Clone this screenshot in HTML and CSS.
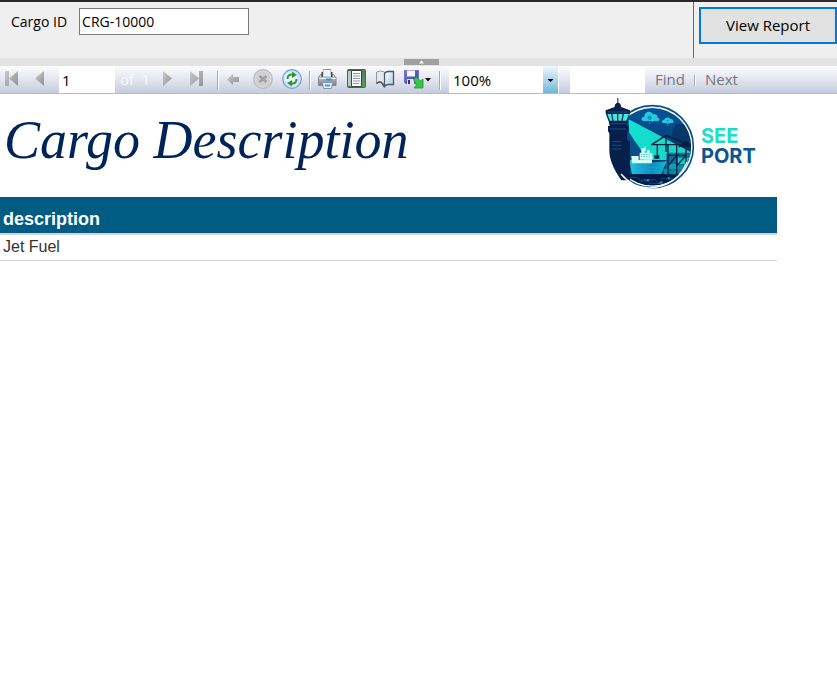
FILE: index.html
```html
<!DOCTYPE html>
<html lang="en">
<head>
<meta charset="utf-8">
<title>Cargo Description</title>
<link rel="stylesheet" href="styles.css">
</head>
<body>
<svg class="defs" aria-hidden="true">
  <defs>
    <linearGradient id="grey" x1="0" y1="0" x2="1" y2="1"><stop offset="0" stop-color="#c9c9c9"/><stop offset="1" stop-color="#939393"/></linearGradient>
    <linearGradient id="metal" x1="0" y1="0" x2="0" y2="1"><stop offset="0" stop-color="#d4d8dc"/><stop offset="1" stop-color="#777d84"/></linearGradient>
    <linearGradient id="paper" x1="0" y1="0" x2="1" y2="1"><stop offset="0" stop-color="#fff"/><stop offset="1" stop-color="#a9c3e6"/></linearGradient>
    <linearGradient id="floppy" x1="0" y1="0" x2="1" y2="1"><stop offset="0" stop-color="#7d7de0"/><stop offset="1" stop-color="#35359c"/></linearGradient>
    <linearGradient id="frame" x1="0" y1="0" x2="1" y2="1"><stop offset="0" stop-color="#4d5c50"/><stop offset="1" stop-color="#5aa05a"/></linearGradient>
  </defs>
</svg>
<form class="params" onsubmit="return false">
  <div class="fields">
    <label for="cargo">Cargo ID</label>
    <input id="cargo" type="text" value="CRG-10000">
  </div>
  <div class="submit"><button class="view" type="submit">View Report</button></div>
</form>
<div class="splitter">
  <button class="handle" type="button" aria-label="Hide parameters"><svg width="35" height="6" viewBox="0 0 35 6"><path d="M15 4.500 17.500 1.500 20 4.500z" fill="#fff"/></svg></button>
</div>
<div class="toolbar">
  <button type="button" aria-label="First page"><svg width="28" height="26" viewBox="0 0 28 26"><path d="M5 5h4v15H5zM18 5v15L9 12.500z" fill="url(#grey)"/></svg></button>
  <button type="button" aria-label="Previous page"><svg width="28" height="26" viewBox="0 0 28 26"><path d="M16 5v15L7 12.500z" fill="url(#grey)"/></svg></button>
  <input class="page" type="text" value="1" aria-label="Current page">
  <span class="total"><span>of</span><span>1</span></span>
  <button type="button" aria-label="Next page"><svg width="28" height="26" viewBox="0 0 28 26"><path d="M10 5v15l9-7.500z" fill="url(#grey)"/></svg></button>
  <button type="button" aria-label="Last page"><svg width="28" height="26" viewBox="0 0 28 26"><path d="M9 5v15l9-7.500zM18 5h4v15h-4z" fill="url(#grey)"/></svg></button>
  <i class="sep first"></i>
  <div class="group">
    <button type="button" aria-label="Back"><svg width="28" height="26" viewBox="0 0 28 26"><path d="M8 13.500 14 8v3h6v5h-6v3z" fill="url(#grey)"/></svg></button>
    <button type="button" aria-label="Stop"><svg width="28" height="26" viewBox="0 0 28 26"><circle cx="15" cy="13" r="9.300" fill="#dadada" stroke="#b8b8b8" stroke-width="1.200"/><circle cx="15" cy="13" r="7.500" fill="#d0d0d0"/><path d="m11.500 10 7 6m0-6-7 6" stroke="#a0a0a0" stroke-width="2.600"/></svg></button>
    <button type="button" aria-label="Refresh"><svg width="28" height="26" viewBox="0 0 28 26"><circle cx="15" cy="13" r="9.300" fill="#cfe4fd" stroke="#6e9edb" stroke-width="1.200"/><circle cx="14" cy="12" r="6" fill="#eef7ff"/><path d="M10.500 13c0-3 1.500-4.800 5-4.500M19.500 13c0 3-1.500 4.800-5 4.500" fill="none" stroke="#2d9a2d" stroke-width="2"/><path d="m15 5.500 5 3.500-5 3zM15 14l-5 3 5 3.500z" fill="#2d9a2d"/></svg></button>
  </div>
  <i class="sep"></i>
  <div class="group">
    <button type="button" aria-label="Print"><svg width="28" height="26" viewBox="0 0 28 26"><path d="M9.500 3.500h7l1 8h-9z" fill="url(#paper)" stroke="#8a929c"/><path d="M4.500 19.500v-8l2-3h13l2.500 3v8z" fill="url(#metal)" stroke="#858a90"/><path d="M9.500 4h7v6h-7z" fill="#f2f7ff"/><path d="M7.500 6h1.500v5H7.500zM17 6h1.500v5H17z" fill="#444a50"/><path d="M5 12.500h17" stroke="#eee"/><path d="M12 13.500h6" stroke="#3195f0" stroke-width="2"/><path d="M8.500 16.500h10l-1 6h-8z" fill="#e8f0fa" stroke="#8a96a5"/><path d="M11 19.500h5" stroke="#3aa0ed" stroke-width="2"/></svg></button>
    <button type="button" aria-label="Print layout"><svg width="28" height="26" viewBox="0 0 28 26"><rect x="4.500" y="3.500" width="18" height="18" rx="1" fill="url(#frame)" stroke="#426b48"/><path d="M5 5h3v15H5z" fill="#b9c9bf"/><path d="M8.500 4.500h10v16h-10z" fill="#fff" stroke="#39483e"/><path d="M10 7.500h7m-7 2.500h7M10 12.500h7m-7 2.500h7M10 17.500h6" stroke="#8294bb"/></svg></button>
    <button type="button" aria-label="Page setup"><svg width="28" height="26" viewBox="0 0 28 26"><path d="M4.500 6q4-2 8 0v13.500q-1.500-4-4-4t-4 2z" fill="#e4e9f0" stroke="#9299a4"/><path d="M4.500 17.500q4-3 6 .5l1.500 2.500" fill="none" stroke="#424b57" stroke-width="1.500"/><path d="M12.500 7.500q1.500-2 3.500-2h5.500v13H16q-2 0-3.500 2z" fill="url(#paper)" stroke="#4c596c" stroke-width="1.300"/></svg></button>
    <button type="button" aria-label="Export"><svg width="34" height="26" viewBox="0 0 34 26"><path d="M3.500 4.500h14v13h-13l-1-1z" fill="url(#floppy)" stroke="#7070c8"/><path d="M6 4.500h8v6H6z" fill="#f4f7ff"/><path d="M6 13h7v5H6z" fill="#dbe1ee"/><path d="M7 14h2v4H7z" fill="#32357d"/><path d="m12.500 13.500 3-2.500 4 4 2.500-2v9h-9l2.500-3z" fill="#37c44a" stroke="#239539" stroke-width=".8"/><path d="M24 12h6l-3 3.500z" fill="#111"/></svg></button>
  </div>
  <i class="sep"></i>
  <div class="zoom">
    <select aria-label="Zoom"><option>100%</option><option>150%</option></select>
    <svg width="15" height="27" viewBox="0 0 15 27" aria-hidden="true"><path d="M4.500 13h6l-3 3z" fill="#000"/></svg>
  </div>
  <input class="search" type="text" aria-label="Find text">
  <a class="find" href="#">Find</a>
  <i class="sep short"></i>
  <a class="next" href="#">Next</a>
</div>
<main class="report">
  <header>
    <h1>Cargo Description</h1>
    <svg class="logo" width="176" height="98" viewBox="0 0 528 294" role="img" aria-label="See Port">
      <defs>
        <clipPath id="disc"><circle cx="157" cy="152" r="116"/></clipPath>
        <clipPath id="edge"><path d="M0 0h160v294H0z M0 0"/></clipPath>
        <linearGradient id="sky" x1="0" y1="0" x2="0" y2="1"><stop offset="0" stop-color="#06559a"/><stop offset=".7" stop-color="#05396f"/><stop offset="1" stop-color="#031b4a"/></linearGradient>
        <linearGradient id="beam" x1="0" y1="0" x2="1" y2="1"><stop offset="0" stop-color="#0ce3d3"/><stop offset="1" stop-color="#21d3c4"/></linearGradient>
        <linearGradient id="hull" x1="0" y1="0" x2="1" y2="0"><stop offset="0" stop-color="#25c6df"/><stop offset=".6" stop-color="#0b8fc0"/><stop offset="1" stop-color="#12bbc9"/></linearGradient>
      </defs>
      <circle cx="157" cy="152" r="123" fill="#fff" stroke="#0c4f8c" stroke-width="5"/>
      <g clip-path="url(#disc)">
        <path d="M30 20h252v264H30z" fill="url(#sky)"/>
        <path d="M216 122c-2-32 20-46 38-35 20-8 40 13 35 36v70h-73z" fill="#06376b"/>
        <path d="m86 70 186 98-6 24H88z" fill="url(#beam)"/>
        <path d="m86 108 52 76-40 54H80z" fill="#0a4c86"/>
        <path d="M200 170h80v66h-84z" fill="#08709c"/>
        <path d="M88 192h32l8 10 72-6-16 38H96z" fill="url(#hull)"/>
        <path d="M94 180h22v12h40v10H96zM119 170h22v-7h8v8h8v20h-38zM124 157h10v13h-10zM134 152h3v13h-3z" fill="#d3fcf5"/>
        <path d="M122 175h32M122 182h30" stroke="#1cb6c9" stroke-width="2" stroke-dasharray="5 3"/>
        <path d="M104 206h30l12 9h36M106 216h22l9 8h38" fill="none" stroke="#20a3cb" stroke-width="2"/>
        <path d="M234 185h32v19h-32z" fill="#17c9c5"/><path d="M208 204h25v15h-25zM252 205h22v16h-22z" fill="#0ba0b8"/><path d="M234 208h18v15h-18zM190 218h18v17h-18zM212 222h20v17h-20zM236 226h20v15h-20z" fill="#0a8aa8"/>
        <path d="M153 146h110M156 145l42-27 68 28M198 118v50M204 146v88M230 146v88M258 146v88M172 148v30M238 150h47M236 154l20-17 28 15M204 178h56M204 210l26-32M230 210l28-32" fill="none" stroke="#06213f" stroke-width="4"/>
        <path d="M163 178h15v10h-15z" fill="#06213f"/>
        <path d="M30 235h252v60H30z" fill="#031a46"/>
        <path d="M74 244h35l11 9h24m-57 9h34l9-11h34l8 8m10-12h42m-115 25h30l9-10h42" fill="none" stroke="#0b659f" stroke-width="2"/>
        <g fill="#1685b8"><circle cx="144" cy="253" r="4"/><circle cx="184" cy="259" r="4"/><circle cx="114" cy="271" r="4"/><circle cx="207" cy="247" r="4"/><circle cx="178" cy="262" r="3"/></g>
      </g>
      <path d="M139 75h-9c-8-2-7-12 3-13 0-16 21-20 26-7 13-2 15 7 14 10 10 3 6 10 0 10h-10l-6 2-6-2zM198 81h-8c-8-3-4-10 3-10 2-9 15-8 18-2 7-1 9 4 8 7 5 4 0 6-4 5h-7l-5 2z" fill="#22cce0"/>
      <g fill="none" stroke="#075991" stroke-width="2"><circle cx="149" cy="65" r="5"/><path d="M145 65h8M200 74h6"/></g><path d="M149 77v7m54-1v6" stroke="#2fa9d0" stroke-width="2"/>
      <path d="M52 6h3v14c8 2 8 9 8 13l27 10v9l-8 24-2 14h6v16l-5 5v20l9 6v116H64C40 217 27 190 28 158V112l-4-6V90h5l-3-14-9-24v-9l27-10c-1-6 2-11 8-13z" fill="#06204b"/>
      <path d="M63 234c28 33 65 48 107 39 45-8 76-38 91-75" fill="none" stroke="#fff" stroke-width="4"/>
      <path d="M22 54h65l-8 20H30z" fill="#41e7dd"/><path d="m35 52 4 23M53 52v23m17-23-4 23" stroke="#06355d" stroke-width="4"/>
      <path d="M23 48h63M31 83h47M29 99h49M37 137h27M37 148h27m-27 11h27" stroke="#145080" stroke-width="3"/>
      <text><tspan class="see" x="303" y="141">SEE</tspan><tspan class="port" x="303" y="201">PORT</tspan></text>
    </svg>
  </header>
  <table>
    <thead><tr><th scope="col">description</th></tr></thead>
    <tbody><tr><td>Jet Fuel</td></tr></tbody>
  </table>
</main>
</body>
</html>
```
FILE: styles.css
```css
* { box-sizing: border-box; }
body { margin: 0; background: #fff; font: 15px/20px "Open Sans", "Noto Sans", sans-serif; color: #000; }
button, input, select { font: inherit; color: inherit; margin: 0; border: 0; border-radius: 0; }
button { padding: 0; background: none; }
svg { display: block; }
.defs { position: absolute; width: 0; height: 0; }

.params { display: flex; height: 58px; border-top: 2px solid #2b292a; background: #efefef; }
.fields { display: flex; flex: 1; align-items: flex-start; gap: 12px; padding: 6px 0 0 11px; font-size: 14px; }
.fields label { line-height: 27px; }
.fields input { width: 170px; height: 27px; padding: 0 2px; border: 1px solid #7a7a7a; background: #fff; }
.submit { padding: 5px 0 0 5px; border-left: 1px solid #696969; }
.view { width: 138px; height: 37px; padding-bottom: 2px; border: 2px solid #0078d7; background: #e1e1e1; }

.splitter { display: flex; justify-content: center; height: 8px; padding: 1px 0 1px 6px; background: #e3e3e3; }
.handle { width: 35px; height: 6px; background: #a0a0a0; }

.toolbar { display: flex; height: 28px; border-bottom: 1px solid #b4bbcf; background: linear-gradient(#fdfdff, #e3e5ef 50%, #c6ccdd); }
.toolbar button { height: 26px; }
.toolbar .page { width: 56px; margin-left: 3px; padding: 0 3px; background: #fff; }
.total { display: flex; justify-content: space-between; width: 38px; padding: 0 3px 0 5px; line-height: 27px; color: #f8f9fd; }
.group { display: flex; gap: 1px; }
.sep { width: 2px; height: 19px; margin: 5px 3px 0 4px; border-left: 1px solid #a3a6b5; border-right: 1px solid #fff; }
.sep.first { margin: 5px 0 0 8px; }
.sep.short { height: 11px; margin: 9px 0 0; }
.zoom { position: relative; width: 110px; margin-left: 5px; background: #fff; }
.zoom select { width: 109px; height: 27px; padding: 0 4px; appearance: none; border-right: 15px solid #9ccbe6; border-image: linear-gradient(#f4fafd, #6db3d9) 1; border-width: 0 15px 0 0; background: #fff; }
.zoom svg { position: absolute; top: 0; right: 1px; pointer-events: none; }
.search { width: 75px; margin-left: 11px; background: #fff; }
.toolbar a { color: #76767c; line-height: 27px; text-decoration: none; }
.find { width: 49px; padding-left: 10px; }
.next { padding-left: 9px; }

.report { max-width: 777px; }
.report header { display: flex; justify-content: space-between; height: 103px; padding: 2px 1px 0 0; }
h1 { margin: 0; padding: 14px 0 0 4px; font: italic 54px/60px "Liberation Serif", serif; color: #00245a; white-space: nowrap; }
.logo text { font: 700 60px "Inter", sans-serif; }
.logo .see { fill: #20dcc7; }
.logo .port { fill: #0b5590; }
table { width: 100%; border-collapse: separate; border-spacing: 0; font-family: "Liberation Sans", sans-serif; text-align: left; }
th { height: 38px; padding: 8px 3px 0; border-bottom: 2px solid #d3d3d3; background: #005c82; color: #fff; font-size: 18px; }
td { height: 26px; padding: 0 3px 2px; border-bottom: 1px solid #d3d3d3; color: #333; font-size: 16px; }
```
